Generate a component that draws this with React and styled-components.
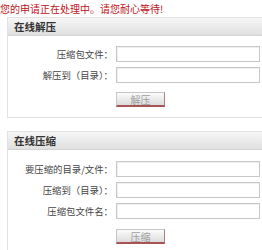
import React from "react";
import styled, { createGlobalStyle } from "styled-components";

const Global = createGlobalStyle`
  html, body { margin: 0; padding: 0; background: #fff; }
  body { font-family: "Noto Sans CJK SC", "DejaVu Sans", sans-serif; width: 262px; height: 250px; overflow: hidden; }
`;

const Page = styled.div`
  display: flex;
  flex-direction: column;
  gap: 13px;
`;

const Notice = styled.div`
  color: #c0141a;
  font-size: 10px;
  line-height: 13px;
  padding-top: 2px;
  height: 15px;
  margin-bottom: -13px;
  white-space: nowrap;
`;

const Panel = styled.section`
  margin-left: 7px;
  width: 260px;
  border: 1px solid #e2e2e2;
  border-right: none;
  box-sizing: border-box;
`;

const Header = styled.div`
  height: 18px;
  box-sizing: border-box;
  background: linear-gradient(#f6f6f6, #e0e0e0);
  border-bottom: 1px solid #d4d4d4;
  font-size: 10.5px;
  font-weight: bold;
  color: #333;
  line-height: 17px;
  padding-left: 6px;
`;

const Body = styled.div`
  display: grid;
  grid-template-columns: 105px 144px;
  column-gap: 3px;
  row-gap: ${(p) => p.$gap}px;
  padding: ${(p) => p.$top}px 0 10px 0;
  align-items: center;
`;

const Label = styled.label`
  text-align: right;
  font-size: 9.4px;
  color: #444;
  white-space: nowrap;
  line-height: 16px;
`;

const Input = styled.input`
  width: 144px;
  height: 16px;
  box-sizing: border-box;
  border: 1px solid #c8c8c8;
  box-shadow: inset 1px 1px 1px #eee;
  padding: 0 2px;
  margin: 0;
  outline: none;
`;

const Button = styled.button`
  grid-column: 2;
  justify-self: start;
  margin-top: ${(p) => p.$mt}px;
  width: 49px;
  height: 15px;
  box-sizing: border-box;
  border: 1px solid #c6c6c6;
  border-bottom: 2px solid #a85454;
  border-right: 1px solid #b08080;
  background: linear-gradient(#fbfbfb, #dcdcdc);
  color: #a0a0a0;
  font-family: inherit;
  font-size: 10px;
  line-height: 11px;
  padding: 0;
`;

function Form({ title, rows, button, top, gap, btnTop }) {
  return (
    <Panel>
      <Header>{title}</Header>
      <Body $top={top} $gap={gap}>
        {rows.map((r) => (
          <React.Fragment key={r}>
            <Label>{r}</Label>
            <Input type="text" />
          </React.Fragment>
        ))}
        <Button $mt={btnTop}>{button}</Button>
      </Body>
    </Panel>
  );
}

export default function App() {
  return (
    <>
      <Global />
      <Page>
        <Notice>您的申请正在处理中。请您耐心等待!</Notice>
        <Form
          title="在线解压"
          rows={["压缩包文件：", "解压到（目录）："]}
          button="解压"
          top={10}
          gap={5}
          btnTop={4}
        />
        <Form
          title="在线压缩"
          rows={["要压缩的目录/文件：", "压缩到（目录）：", "压缩包文件名："]}
          button="压缩"
          top={11}
          gap={5}
          btnTop={5}
        />
      </Page>
    </>
  );
}
